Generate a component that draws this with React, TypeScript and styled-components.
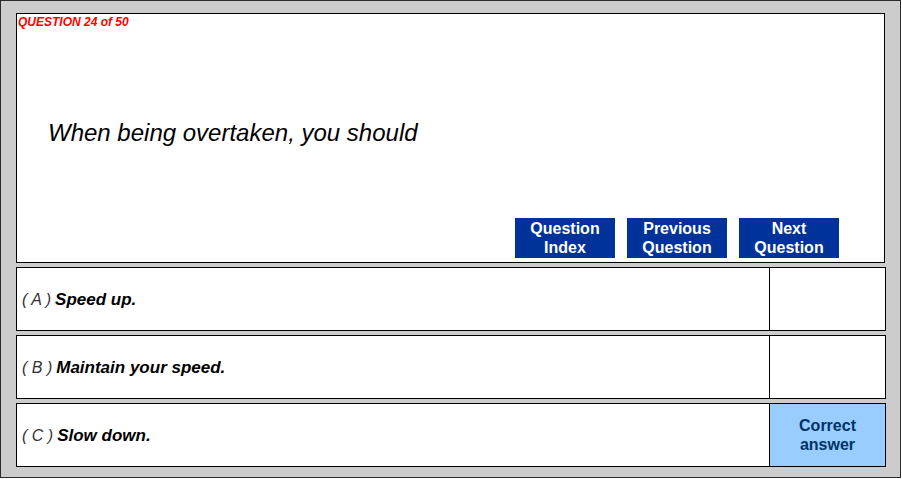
import React from "react";
import styled, { createGlobalStyle } from "styled-components";

const Global = createGlobalStyle`
  html, body { margin: 0; padding: 0; background: #ffffff; }
  * { box-sizing: border-box; }
`;

const Frame = styled.div`
  width: 901px;
  height: 478px;
  border: 1px solid #2b2b2b;
  background: #cccccc;
  padding: 12px 14px 10px 15px;
  display: flex;
  flex-direction: column;
  gap: 4px;
  font-family: "Liberation Sans", Arial, sans-serif;
`;

const QuestionPanel = styled.section`
  height: 250px;
  margin-right: 1px;
  border: 1px solid #000;
  background: #fff;
  display: flex;
  flex-direction: column;
  padding: 0 45px 4px 0;
`;

const Counter = styled.div`
  color: #ff0000;
  font-size: 12px;
  line-height: 14px;
  font-weight: bold;
  font-style: italic;
  padding-left: 1px;
  margin-top: 1px;
`;

const QuestionText = styled.h1`
  margin: 90px 0 0 31px;
  font-size: 24px;
  line-height: 28px;
  font-weight: normal;
  font-style: italic;
  color: #000;
`;

const NavBar = styled.div`
  margin-top: auto;
  display: flex;
  justify-content: flex-end;
  gap: 12px;
`;

const NavButton = styled.button`
  width: 100px;
  height: 40px;
  border: none;
  padding: 0;
  background: #003399;
  color: #fff;
  font-family: "Liberation Sans", Arial, sans-serif;
  font-size: 16px;
  line-height: 19px;
  font-weight: bold;
  text-align: center;
  cursor: pointer;
`;

const AnswerRow = styled.div`
  height: 64px;
  border: 1px solid #000;
  background: #fff;
  display: grid;
  grid-template-columns: 1fr 116px;
`;

const AnswerText = styled.div`
  display: flex;
  align-items: center;
  padding: 2px 0 0 5px;
  font-style: italic;
  color: #000;
`;

const Letter = styled.span`
  font-size: 16px;
  font-weight: normal;
  color: #333;
  margin-right: 4px;
`;

const Choice = styled.span`
  font-size: 17px;
  font-weight: bold;
`;

const ResultCell = styled.div<{ $correct?: boolean }>`
  border-left: 1px solid #000;
  background: ${(p) => (p.$correct ? "#99ccff" : "#fff")};
  color: #003366;
  font-size: 16px;
  line-height: 19px;
  font-weight: bold;
  display: flex;
  align-items: center;
  justify-content: center;
  text-align: center;
`;

const answers = [
  { letter: "A", text: "Speed up.", correct: false },
  { letter: "B", text: "Maintain your speed.", correct: false },
  { letter: "C", text: "Slow down.", correct: true },
];

export default function App() {
  return (
    <>
      <Global />
      <Frame>
        <QuestionPanel>
          <Counter>QUESTION 24 of 50</Counter>
          <QuestionText>When being overtaken, you should</QuestionText>
          <NavBar>
            <NavButton>Question<br />Index</NavButton>
            <NavButton>Previous<br />Question</NavButton>
            <NavButton>Next<br />Question</NavButton>
          </NavBar>
        </QuestionPanel>
        {answers.map((a) => (
          <AnswerRow key={a.letter}>
            <AnswerText>
              <Letter>( {a.letter} )</Letter>
              <Choice>{a.text}</Choice>
            </AnswerText>
            <ResultCell $correct={a.correct}>
              {a.correct ? (
                <span>Correct<br />answer</span>
              ) : null}
            </ResultCell>
          </AnswerRow>
        ))}
      </Frame>
    </>
  );
}
